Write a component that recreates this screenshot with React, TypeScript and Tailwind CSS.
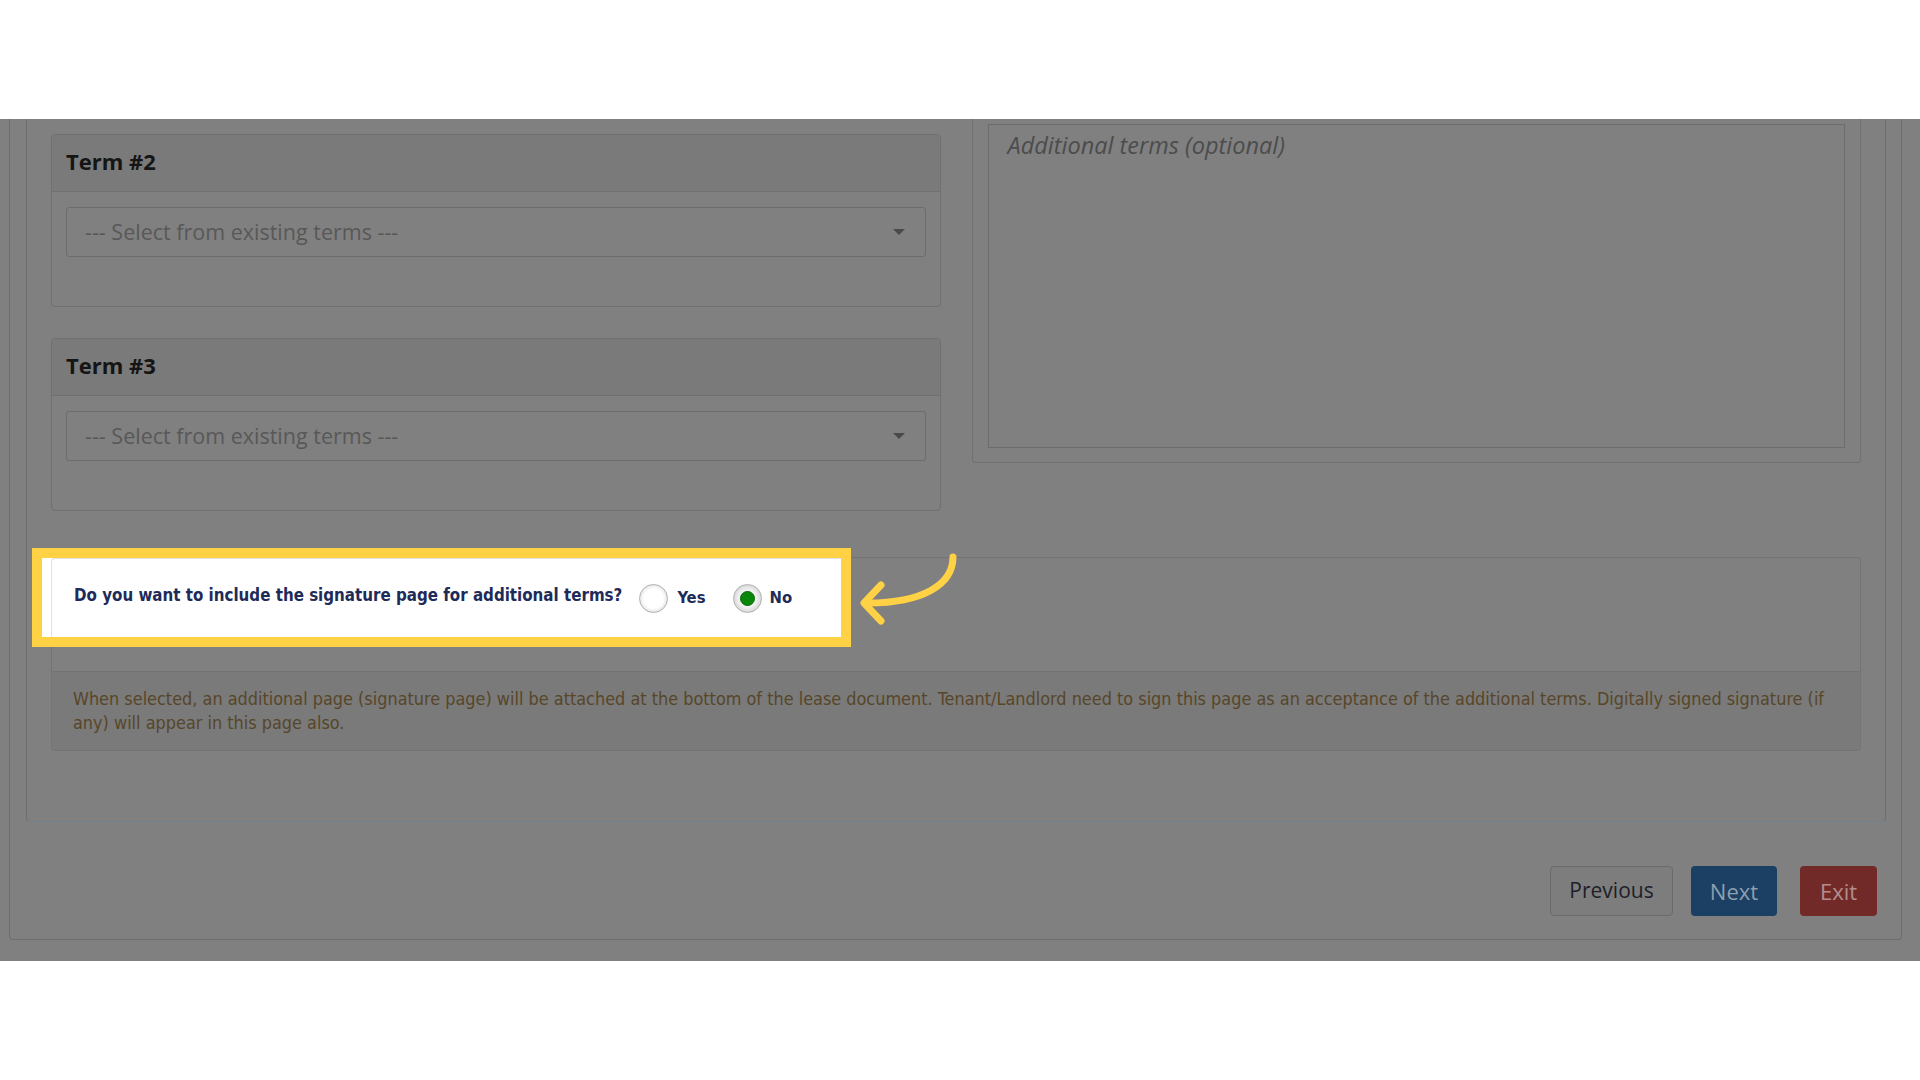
function TermCard({ label }: { label: string }) {
  return (
    <div className="border border-[#707070] rounded-[4px] bg-[#808080]">
      <div className="h-[57px] flex items-center px-[14px] bg-[#7a7a7a] border-b border-[#707070] rounded-t-[4px]">
        <span className="text-[22px] font-bold text-[#151515] -mt-[3px]">{label}</span>
      </div>
      <div className="px-[14px] pt-[15px] pb-[49px]">
        <div className="h-[50px] border border-[#6c6c6c] rounded-[3px] flex items-center justify-between pl-[18px] pr-[20px]">
          <span className="text-[21.5px] text-[#585858]">--- Select from existing terms ---</span>
          <span className="w-0 h-0 border-l-[6px] border-r-[6px] border-t-[6px] border-l-transparent border-r-transparent border-t-[#4a4a4a]" />
        </div>
      </div>
    </div>
  );
}

function Radio({ checked }: { checked: boolean }) {
  if (checked) {
    return (
      <span className="block shrink-0 w-[29px] h-[29px] rounded-full border border-[#b0b0b0] bg-[radial-gradient(circle,#f2f2f2_45%,#bebebe_100%)] flex items-center justify-center">
        <span className="block w-[15px] h-[15px] rounded-full bg-[#0a870a] border border-[#056b05]" />
      </span>
    );
  }
  return (
    <span className="block shrink-0 w-[29px] h-[29px] rounded-full border border-[#b0b0b0] bg-[radial-gradient(circle,#ffffff_50%,#cacaca_100%)]" />
  );
}

export default function App() {
  return (
    <div className="w-[1920px] h-[1080px] bg-white flex flex-col overflow-hidden font-['Open_Sans',sans-serif]">
      <div className="h-[119px] shrink-0 bg-white" />

      <div className="h-[842px] shrink-0 bg-[#808080] overflow-hidden">
        {/* outer box, top is scrolled out of view */}
        <div className="ml-[9px] mr-[18px] border-x border-b border-[#6e6e6e] rounded-b-[4px]">
          <div className="ml-[16px] mr-[15px] border-x border-b border-[#6e6e6e] border-b-[#71808a] rounded-b-[4px] px-[24px] pb-[70px]">
            <div className="grid grid-cols-2 gap-[31px] items-start">
              <div className="pt-[15px] flex flex-col gap-[31px]">
                <TermCard label="Term #2" />
                <TermCard label="Term #3" />
              </div>

              <div className="border-x border-b border-[#707070] rounded-b-[4px] pt-[5px] px-[15px] pb-[14px]">
                <div className="h-[324px] border border-[#6c6c6c] px-[19px] pt-[3px]">
                  <span className="text-[23.5px] italic text-[#4c4c4c]">Additional terms (optional)</span>
                </div>
              </div>
            </div>

            {/* signature page panel */}
            <div className="mt-[46px] border border-[#737373] rounded-[4px] relative">
              <div className="h-[114px] border-b border-[#737373]" />
              <div className="bg-[#7a7a7a] rounded-b-[4px] pl-[21px] pr-[22px] py-[15px]">
                <p className="text-[17.9px] leading-[24px] text-[#574629] font-['DejaVu_Sans_Condensed','DejaVu_Sans',sans-serif] [font-stretch:condensed]">
                  When selected, an additional page (signature page) will be attached at the bottom of the lease document. Tenant/Landlord need to sign this page as an acceptance of the additional terms. Digitally signed signature (if any) will appear in this page also.
                </p>
              </div>

              {/* highlight */}
              <div className="absolute -left-[20px] -top-[10px] w-[819px] h-[99px] border-[10px] border-[#ffd145] bg-white">
                <div className="ml-[9px] h-full border-l border-t border-[#e2e2e2] rounded-tl-[4px] pl-[22px] flex items-center font-['DejaVu_Sans_Condensed','DejaVu_Sans',sans-serif] [font-stretch:condensed] font-bold text-[#1e2b58]">
                  <span className="text-[16.8px] -mt-[5px]">Do you want to include the signature page for additional terms?</span>
                  <span className="ml-[17px]"><Radio checked={false} /></span>
                  <span className="ml-[9px] text-[16.5px]">Yes</span>
                  <span className="ml-[27px]"><Radio checked /></span>
                  <span className="ml-[8px] text-[16.5px]">No</span>
                </div>
              </div>

              {/* arrow */}
              <svg className="absolute left-[798px] -top-[13px]" width="110" height="85" viewBox="0 0 110 85" fill="none">
                <path d="M103 12 C103 40 72 58 18 58" stroke="#ffd145" strokeWidth="7" strokeLinecap="round" />
                <path d="M31 40 L14 58 L31 76" stroke="#ffd145" strokeWidth="7" strokeLinecap="round" strokeLinejoin="round" />
              </svg>
            </div>
          </div>

          <div className="flex justify-end gap-[17px] pt-[44px] pb-[23px] pr-[24px]">
            <button className="h-[50px] w-[123px] border border-[#6a6a6a] rounded-[4px] bg-[#7d7d7d] text-[21px] text-[#1d1f28]">Previous</button>
            <button className="h-[50px] w-[86px] rounded-[4px] bg-[#1b4064] text-[22px] text-[#8d9eae] ml-[1px]">Next</button>
            <button className="h-[50px] w-[77px] rounded-[4px] bg-[#722a29] text-[22px] text-[#b38e8c] ml-[6px]">Exit</button>
          </div>
        </div>
      </div>

      <div className="flex-1 bg-white" />
    </div>
  );
}
